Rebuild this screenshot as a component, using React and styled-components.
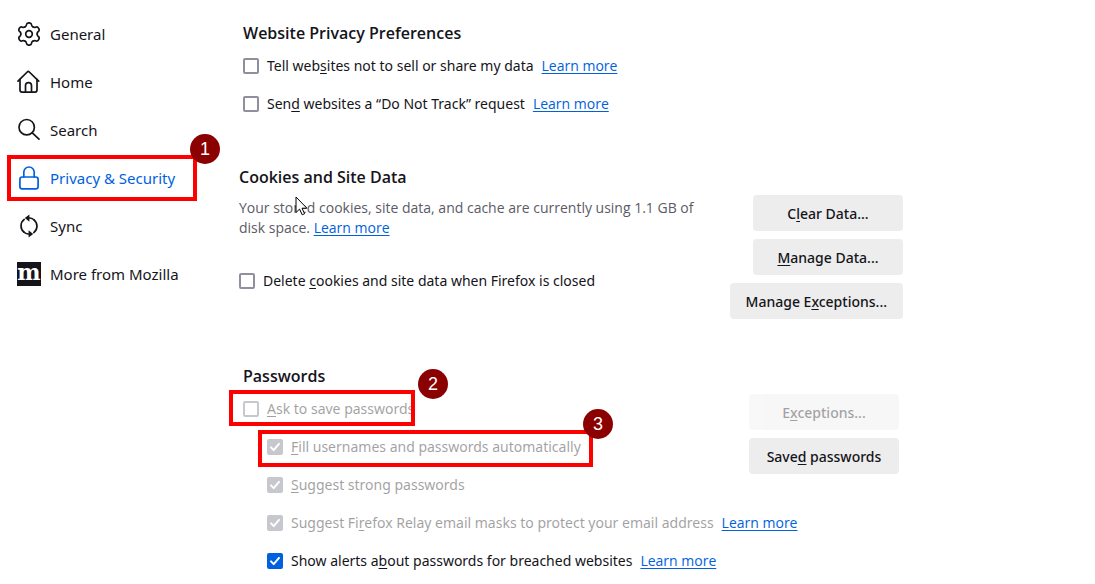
import React from 'react';
import styled, { createGlobalStyle, css } from 'styled-components';

const TEXT = '#15141a';
const MUTED = '#5b5b66';
const BLUE = '#0061e0';
const RED = '#ff0000';

const GearIcon = () => (
  <Svg viewBox="-12 -12 24 24">
    {[0, 60, 120, 180, 240, 300].map((angle) => (
      <path
        key={angle}
        transform={`rotate(${angle})`}
        d="M-4.1-7.1C-3.3-7.5-2.7-8-2.6-9C-2.5-10.3-1.4-11.2 0-11.2C1.4-11.2 2.5-10.3 2.6-9C2.7-8 3.3-7.5 4.1-7.1"
      />
    ))}
    <circle r="3.3" />
  </Svg>
);

const HomeIcon = () => (
  <Svg viewBox="0 0 24 24">
    <path d="M1 11.2L10.2 2a1.5 1.5 0 0 1 2.1 0l9.4 9.2" />
    <path d="M3 9.4v10.7a2 2 0 0 0 2 2h13a2 2 0 0 0 2-2V9.4" />
    <path d="M8.5 22v-6.4a3 3 0 0 1 6 0V22" />
  </Svg>
);

const SearchIcon = () => (
  <Svg viewBox="0 0 24 24">
    <circle cx="9.7" cy="9.2" r="7.7" />
    <path d="M15.3 14.8l6.7 6.4" />
  </Svg>
);

const LockIcon = () => (
  <Svg viewBox="0 0 24 24">
    <rect x="2.9" y="11" width="18.2" height="11.9" rx="2.4" />
    <path d="M6.8 11V6.2a5.2 5.2 0 0 1 10.4 0V11" />
  </Svg>
);

const SyncIcon = () => (
  <Svg viewBox="0 0 24 24">
    <path d="M7 18.2A8.2 8.2 0 0 1 7.2 5.4M17 5.8a8.2 8.2 0 0 1-.2 12.8" />
    <path d="M11.6 4h1.4c1.6.1 3 .8 4.2 2M12.4 20H11c-1.6-.1-3-.8-4.2-2" />
    <path
      d="M12.4.4v7.4L7.8 4.1zM11.6 23.6v-7.4l4.6 3.7z"
      fill="currentColor"
      stroke="none"
    />
  </Svg>
);

const MozillaLogo = () => <StyledLogo aria-hidden="true">m</StyledLogo>;

const NAV_ITEMS = [
  { name: 'General', icon: <GearIcon /> },
  { name: 'Home', icon: <HomeIcon /> },
  { name: 'Search', icon: <SearchIcon /> },
  { name: 'Privacy & Security', icon: <LockIcon />, active: true },
  { name: 'Sync', icon: <SyncIcon /> },
  { name: 'More from Mozilla', icon: <MozillaLogo /> },
];

const LearnMore = () => <StyledLink href="#learn-more">Learn more</StyledLink>;

const CheckRow = ({ id, checked, disabled, indent, link, mark, children }) => (
  <StyledRow $indent={indent}>
    <StyledCheck>
      <StyledInput
        type="checkbox"
        id={id}
        defaultChecked={checked}
        disabled={disabled}
      />
      <StyledTick viewBox="0 0 16 16">
        <path d="M4 8.4l2.7 2.7L12 4.9" />
      </StyledTick>
    </StyledCheck>
    <StyledLabel htmlFor={id} $disabled={disabled}>
      {children}
    </StyledLabel>
    {link && <LearnMore />}
    {mark}
  </StyledRow>
);

const App = () => {
  return (
    <>
      <GlobalStyle />
      <Page>
        <Sidebar>
          {NAV_ITEMS.map(({ name, icon, active }) => (
            <NavItem key={name} href="#" $active={active}>
              {icon}
              {name}
              {active && (
                <NavMark>
                  <Badge>1</Badge>
                </NavMark>
              )}
            </NavItem>
          ))}
        </Sidebar>

        <Main>
          <Section $inset>
            <Heading>Website Privacy Preferences</Heading>
            <CheckRow id="gpc" link>
              Tell web<u>s</u>ites not to sell or share my data
            </CheckRow>
            <CheckRow id="dnt" link>
              Sen<u>d</u> websites a “Do Not Track” request
            </CheckRow>
          </Section>

          <Section>
            <Heading>Cookies and Site Data</Heading>
            <Columns>
              <Fill>
                <Description>
                  Your stored cookies, site data, and cache are currently using
                  1.1 GB of disk space. <LearnMore />
                  <Cursor viewBox="0 0 13 20">
                    <path d="M1 1v15.5l3.6-3.4 2.6 5.7 2.4-1.1L7 12.2h4.9z" />
                  </Cursor>
                </Description>
                <CheckRow id="delete-cookies">
                  Delete <u>c</u>ookies and site data when Firefox is closed
                </CheckRow>
              </Fill>
              <Buttons>
                <Button>
                  C<u>l</u>ear Data...
                </Button>
                <Button>
                  <u>M</u>anage Data...
                </Button>
                <Button>
                  Manage E<u>x</u>ceptions...
                </Button>
              </Buttons>
            </Columns>
          </Section>

          <Section $inset>
            <Heading>Passwords</Heading>
            <Columns>
              <Fill>
                <CheckRow
                  id="ask-save"
                  disabled
                  mark={
                    <AskMark>
                      <Badge $outset={37}>2</Badge>
                    </AskMark>
                  }
                >
                  <u>A</u>sk to save passwords
                </CheckRow>
                <CheckRow
                  id="autofill"
                  checked
                  disabled
                  indent
                  mark={
                    <FillMark>
                      <Badge $outset={24}>3</Badge>
                    </FillMark>
                  }
                >
                  <u>F</u>ill usernames and passwords automatically
                </CheckRow>
                <CheckRow id="suggest" checked disabled indent>
                  <u>S</u>uggest strong passwords
                </CheckRow>
              </Fill>
              <Buttons>
                <Button disabled>
                  E<u>x</u>ceptions...
                </Button>
                <Button>
                  Save<u>d</u> passwords
                </Button>
              </Buttons>
            </Columns>
            <CheckRow id="relay" checked disabled indent link>
              Suggest Fi<u>r</u>efox Relay email masks to protect your email
              address
            </CheckRow>
            <CheckRow id="breaches" checked indent link>
              Show alerts a<u>b</u>out passwords for breached websites
            </CheckRow>
          </Section>
        </Main>
      </Page>
    </>
  );
};

export default App;

const GlobalStyle = createGlobalStyle`
  * {
    box-sizing: border-box;
  }

  body {
    margin: 0;
    background: #ffffff;
    color: ${TEXT};
    font-family: 'Open Sans', 'Noto Sans', sans-serif;
    font-size: 14px;
    line-height: 20px;
  }

  u {
    text-underline-offset: 2px;
  }
`;

const Page = styled.div`
  display: flex;
`;

const Sidebar = styled.nav`
  display: flex;
  flex-direction: column;
  flex: 0 0 239px;
  padding: 10px 42px 0 17px;
`;

const NavItem = styled.a`
  position: relative;
  display: flex;
  align-items: center;
  gap: 9px;
  height: 48px;
  font-family: 'Noto Sans', 'Open Sans', sans-serif;
  font-size: 15px;
  white-space: nowrap;
  text-decoration: none;
  color: ${({ $active }) => ($active ? BLUE : TEXT)};
`;

const Svg = styled.svg`
  flex: none;
  width: 24px;
  height: 24px;
  fill: none;
  stroke: currentColor;
  stroke-width: 1.7;
  stroke-linecap: round;
  stroke-linejoin: round;
`;

const StyledLogo = styled.span`
  flex: none;
  width: 24px;
  height: 24px;
  background: ${TEXT};
  color: #ffffff;
  font: bold 22px/20px 'DejaVu Serif', serif;
  text-align: center;
`;

const Main = styled.main`
  flex: 1;
  max-width: 664px;
  padding-top: 19px;
`;

const Section = styled.section`
  padding: ${({ $inset }) => ($inset ? '0 4px' : '0')};

  & + & {
    margin-top: 40px;
  }
`;

const Heading = styled.h2`
  margin: 0;
  font-size: 16px;
  font-weight: 600;
  line-height: 28px;
`;

const Columns = styled.div`
  display: flex;
  align-items: flex-start;
`;

const Fill = styled.div`
  flex: 1;
`;

const Description = styled.p`
  position: relative;
  max-width: 464px;
  margin: 7px 0 24px;
  color: ${MUTED};
`;

const StyledLink = styled.a`
  color: ${BLUE};
  text-underline-offset: 2px;
`;

const Cursor = styled.svg`
  position: absolute;
  left: 56px;
  top: -2px;
  width: 13px;
  height: 20px;
  fill: #ffffff;
  stroke: #000000;
`;

const StyledRow = styled.div`
  position: relative;
  display: flex;
  align-items: center;
  gap: 8px;
  height: 38px;
  margin-left: ${({ $indent }) => ($indent ? '24px' : '0')};
  white-space: nowrap;
`;

const StyledLabel = styled.label`
  font-family: 'Noto Sans', 'Open Sans', sans-serif;
  opacity: ${({ $disabled }) => ($disabled ? 0.4 : 1)};
`;

const StyledCheck = styled.span`
  display: grid;
  flex: none;

  & > * {
    grid-area: 1 / 1;
  }
`;

const StyledInput = styled.input`
  appearance: none;
  width: 16px;
  height: 16px;
  margin: 0;
  border: 2px solid #8f8f9d;
  border-radius: 2px;
  background: #ffffff;

  &:checked {
    border-color: ${BLUE};
    background: ${BLUE};
  }

  &:disabled {
    border-color: #c7c7ce;
  }

  &:disabled:checked {
    background: #c7c7ce;
  }
`;

const StyledTick = styled.svg`
  width: 16px;
  height: 16px;
  fill: none;
  stroke: #ffffff;
  stroke-width: 2;
  stroke-linecap: round;
  stroke-linejoin: round;
  pointer-events: none;
`;

const Buttons = styled.div`
  display: flex;
  flex-direction: column;
  align-items: flex-end;
  gap: 8px;
  padding: 4px 0 3px;
`;

const Button = styled.button`
  min-width: 150px;
  height: 36px;
  padding: 0 16px;
  border: 0;
  border-radius: 4px;
  background: #ededed;
  color: ${TEXT};
  font: 500 14px 'Noto Sans', 'Open Sans', sans-serif;

  &:disabled {
    opacity: 0.4;
  }
`;

// Numbered callouts drawn over the settings
const mark = css`
  position: absolute;
  border: 4px solid ${RED};
  pointer-events: none;
`;

const NavMark = styled.span`
  ${mark}
  inset: 1px 0 1px -10px;
`;

const AskMark = styled.span`
  ${mark}
  inset: 0 auto 2px -14px;
  width: 186px;
`;

const FillMark = styled.span`
  ${mark}
  inset: 2px auto -1px -9px;
  width: 335px;
`;

const Badge = styled.span`
  position: absolute;
  right: ${({ $outset = 27 }) => -$outset}px;
  top: -25px;
  width: 30px;
  height: 30px;
  border-radius: 50%;
  background: #8b0000;
  color: #ffffff;
  font: 18px/30px 'Liberation Sans', sans-serif;
  text-align: center;
`;
